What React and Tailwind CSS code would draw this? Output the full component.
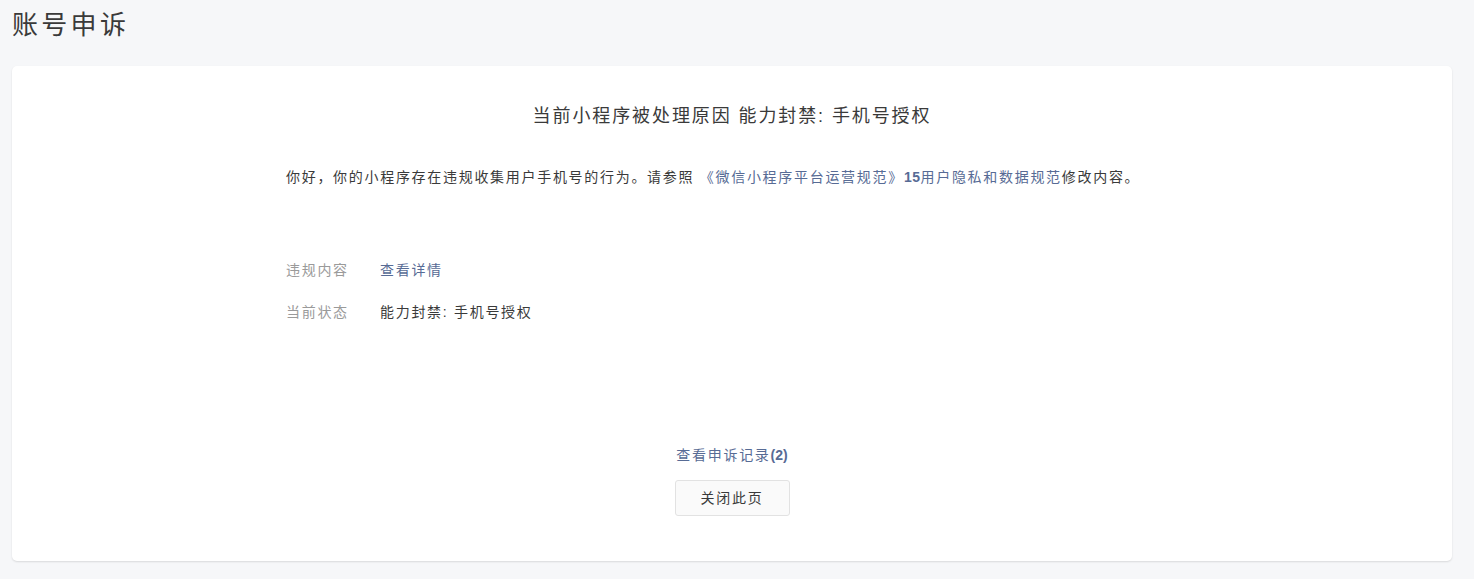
import React from 'react';

// Account appeal page: header + single white card with the violation summary.
const font = { fontFamily: '"Liberation Sans", "Noto Sans CJK SC", sans-serif' };

export default function App() {
  return (
    <div className="min-h-[579px] bg-[#f6f7f9] pl-3 pr-[22px] pb-[18px]" style={font}>
      <h1 className="pt-[6px] h-[66px] text-[26px] tracking-[3.3px] leading-[38px] text-[#3a3a3a] font-normal">账号申诉</h1>

      <div className="bg-white rounded-[5px] shadow-[0_1px_2px_rgba(0,0,0,0.12)] h-[495px] flex flex-col items-center">
        <h2 className="mt-[37px] text-[18px] tracking-[1.9px] leading-[26px] text-[#3a3a3a] font-normal">
          当前小程序被处理原因 能力封禁: 手机号授权
        </h2>

        <div className="w-[892px] mt-[36px] text-[14px] tracking-[1.7px]">
          <p className="leading-[24px] text-[#3a3a3a]">
            你好，你的小程序存在违规收集用户手机号的行为。请参照{' '}
            <a className="text-[#576b95]">《微信小程序平台运营规范》<b className="tracking-[0.5px]">15</b>用户隐私和数据规范</a>修改内容。
          </p>

          <dl className="mt-[69px] leading-[24px] flex flex-col gap-[18px]">
            <div className="flex">
              <dt className="w-[94px] text-[#9a9a9a]">违规内容</dt>
              <dd className="text-[#576b95]">查看详情</dd>
            </div>
            <div className="flex">
              <dt className="w-[94px] text-[#9a9a9a]">当前状态</dt>
              <dd className="text-[#3a3a3a]">能力封禁: 手机号授权</dd>
            </div>
          </dl>
        </div>

        <a className="mt-[119px] text-[14px] tracking-[1.7px] leading-[24px] text-[#576b95]">
          查看申诉记录<b className="tracking-normal">(2)</b>
        </a>
        <button className="mt-[13px] w-[115px] h-[36px] rounded-[3px] border border-[#e2e2e2] bg-[#fafafa] text-[14px] tracking-[1.7px] text-[#3a3a3a]">
          关闭此页
        </button>
      </div>
    </div>
  );
}
